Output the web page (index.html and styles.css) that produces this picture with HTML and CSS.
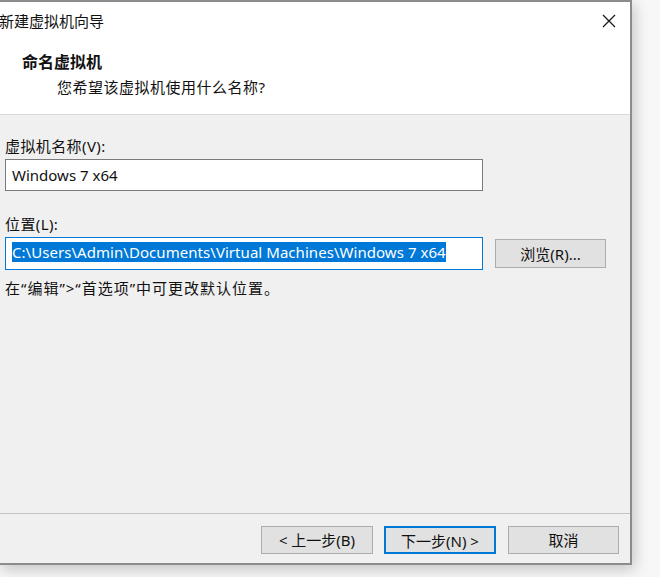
FILE: index.html
```html
<!DOCTYPE html>
<html lang="zh-CN">
<head>
    <meta charset="UTF-8">
    <meta name="viewport" content="width=device-width, initial-scale=1.0">
    <title>新建虚拟机向导</title>
    <link rel="stylesheet" href="styles.css">
</head>
<body>
    <div class="window">
        <div class="titlebar">
            <span class="title">新建虚拟机向导</span>
            <svg class="close" width="14" height="14" viewBox="0 0 14 14">
                <path d="M1 1 L13 13 M13 1 L1 13" stroke="#1a1a1a" stroke-width="1.3" fill="none"/>
            </svg>
        </div>
        <div class="header">
            <div class="heading">命名虚拟机</div>
            <div class="subheading">您希望该虚拟机使用什么名称?</div>
        </div>
        <div class="content">
            <div class="label">虚拟机名称(V):</div>
            <div class="field name-field">Windows 7 x64</div>
            <div class="label location-label">位置(L):</div>
            <div class="row">
                <div class="field focused"><span class="selected">C:\Users\Admin\Documents\Virtual Machines\Windows 7 x64</span></div>
                <button class="btn browse">浏览(R)...</button>
            </div>
            <p class="hint">在“编辑”&gt;“首选项”中可更改默认位置。</p>
        </div>
        <div class="footer">
            <button class="btn">&lt; 上一步(B)</button>
            <button class="btn primary">下一步(N) &gt;</button>
            <button class="btn cancel">取消</button>
        </div>
    </div>
</body>
</html>
```

FILE: styles.css
```css
body, html {
    margin: 0;
    padding: 0;
    height: 100%;
    overflow: hidden;
    background: #f7f7f7;
    font-family: "Noto Sans", "Noto Sans CJK SC", sans-serif;
    color: #111;
}

.window {
    box-sizing: border-box;
    width: 632px;
    height: 565px;
    display: flex;
    flex-direction: column;
    background: #f0f0f0;
    border-top: 2px solid #8c8c8c;
    border-right: 2px solid #8c8c8c;
    border-bottom: 2px solid #8c8c8c;
    box-shadow: 2px 4px 14px rgba(0, 0, 0, 0.22);
}

.titlebar {
    height: 40px;
    display: flex;
    align-items: center;
    justify-content: space-between;
    background: #fff;
    padding-right: 14px;
}

.title {
    font-size: 15px;
    line-height: 20px;
    margin-left: -1px;
    margin-top: -2px;
}

.close {
    margin-top: -2px;
}

.header {
    background: #fff;
    padding: 10px 0 17px 22px;
    border-bottom: 1px solid #d9d9d9;
}

.heading {
    font-size: 16px;
    line-height: 20px;
    font-weight: bold;
}

.subheading {
    font-size: 15px;
    line-height: 20px;
    margin-top: 5px;
    padding-left: 35px;
    letter-spacing: 0.5px;
}

.content {
    flex: 1;
    padding: 21px 0 0 5px;
    font-size: 15px;
}

.label {
    line-height: 20px;
    margin-bottom: 3px;
    letter-spacing: 0.4px;
}

.location-label {
    margin-top: 23px;
}

.field {
    box-sizing: border-box;
    width: 478px;
    height: 32px;
    background: #fff;
    border: 1px solid #7a7a7a;
    padding-left: 6px;
    line-height: 30px;
    white-space: nowrap;
    overflow: hidden;
}

.field.focused {
    border-color: #0078d7;
    height: 33px;
    line-height: 20px;
    padding-top: 4px;
}

.selected {
    background: #0078d7;
    color: #fff;
    display: inline-block;
    line-height: 20px;
    letter-spacing: 0.05px;
}

.row {
    display: flex;
    align-items: flex-start;
    gap: 12px;
}

.btn {
    box-sizing: border-box;
    width: 112px;
    height: 28px;
    background: #e1e1e1;
    border: 1px solid #adadad;
    font-family: "Noto Sans", "Noto Sans CJK SC", sans-serif;
    font-size: 15px;
    color: #111;
    padding: 0;
    line-height: 26px;
}

.browse {
    width: 111px;
    height: 29px;
    margin-top: 2px;
}

.hint {
    margin: 8px 0 0;
    line-height: 20px;
    letter-spacing: 1px;
}

.footer {
    display: flex;
    justify-content: flex-end;
    gap: 11px;
    padding: 12px 11px 9px 0;
    border-top: 1px solid #c4c4c4;
}

.primary {
    border: 2px solid #0078d7;
    margin-right: 1px;
}

.cancel {
    width: 111px;
}
```
